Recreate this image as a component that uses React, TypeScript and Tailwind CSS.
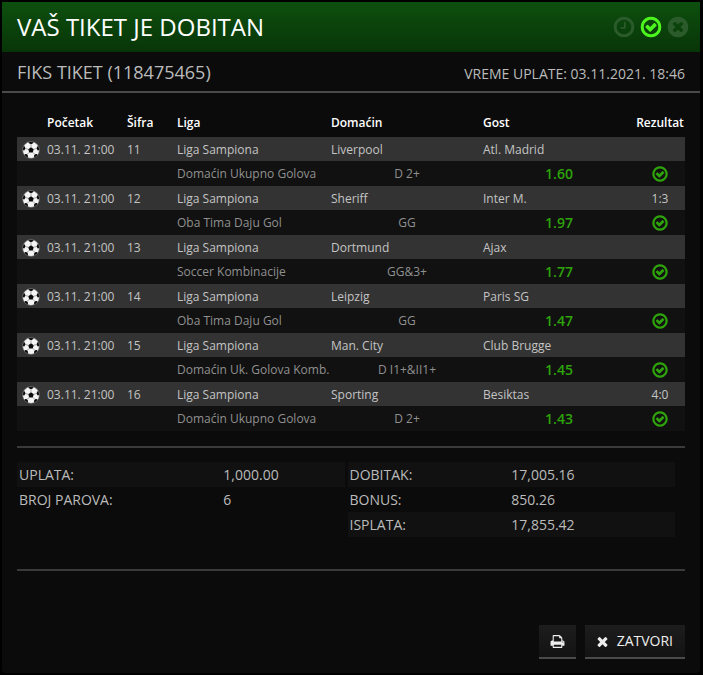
import type React from "react"
import { Fragment } from "react"

const RING =
  "m0 0q0-148-73-273t-198-198-273-73-273 73-198 198-73 273 73 273 198 198 273 73 273-73 198-198 73-273zm224 0q0 209-103 385.5t-279.5 279.5-385.5 103-385.5-103-279.5-279.5-103-385.5 103-385.5 279.5-279.5 385.5-103 385.5 103 279.5 279.5 103 385.5z"

const icons = {
  check:
    "M1299 813l-422 422q-19 19-45 19t-45-19l-294-294q-19-19-19-45t19-45l102-102q19-19 45-19t45 19l147 147 275-275q19-19 45-19t45 19l102 102q19 19 19 45t-19 45zM1440 896" +
    RING,
  clock:
    "M1024 544v448q0 14-9 23t-23 9h-320q-14 0-23-9t-9-23v-64q0-14 9-23t23-9h224v-352q0-14 9-23t23-9h64q14 0 23 9t9 23zM1440 896" +
    RING,
  timesCircle:
    "M1277 1122q0-26-19-45l-181-181 181-181q19-19 19-45 0-27-19-46l-90-90q-19-19-46-19-26 0-45 19l-181 181-181-181q-19-19-45-19-27 0-46 19l-90 90q-19 19-19 46 0 26 19 45l181 181-181 181q-19 19-19 45 0 27 19 46l90 90q19 19 46 19 26 0 45-19l181-181 181 181q19 19 45 19 27 0 46-19l90-90q19-19 19-46zm387-226q0 209-103 385.5t-279.5 279.5-385.5 103-385.5-103-279.5-279.5-103-385.5 103-385.5 279.5-279.5 385.5-103 385.5 103 279.5 279.5 103 385.5z",
  times:
    "M1490 1322q0 40-28 68l-136 136q-28 28-68 28t-68-28l-294-294-294 294q-28 28-68 28t-68-28l-136-136q-28-28-28-68t28-68l294-294-294-294q-28-28-28-68t28-68l136-136q28-28 68-28t68 28l294 294 294-294q28-28 68-28t68 28l136 136q28 28 28 68t-28 68l-294 294 294 294q28 28 28 68z",
  print:
    "M448 1536h896v-256h-896v256zm0-640h896v-384h-160q-40 0-68-28t-28-68v-160h-640v640zm1152 64q0-26-19-45t-45-19-45 19-19 45 19 45 45 19 45-19 19-45zm128 0v416q0 13-9.5 22.5t-22.5 9.5h-224v160q0 40-28 68t-68 28h-960q-40 0-68-28t-28-68v-160h-224q-13 0-22.5-9.5t-9.5-22.5v-416q0-79 56.5-135.5t135.5-56.5h64v-544q0-40 28-68t68-28h672q40 0 88 20t76 48l152 152q28 28 48 76t20 88v256h64q79 0 135.5 56.5t56.5 135.5z",
}

interface IconProps {
  name: keyof typeof icons
  className?: string
}

function Icon({ name, className = "" }: IconProps) {
  return (
    <svg viewBox="0 0 1792 1792" fill="currentColor" aria-hidden="true" className={`shrink-0 ${className}`}>
      <path d={icons[name]} />
    </svg>
  )
}

function Ball() {
  return (
    <svg viewBox="0 0 36 36" aria-hidden="true" className="size-[18px]">
      <circle cx="18" cy="18" r="17" fill="#f4f4f4" />
      <path
        fill="#0a0a0a"
        d="M18 12.500l5.500 4-2 6.500h-7l-2-6.500zM12.500 1.500h11l-1.500 3-4 2-4-2zM1 18l2-8 2.500 1 1.500 4-2.500 4zM35 18l-2-8-2.500 1-1.500 4 2.500 4zM5 29l1-3 4 .500 2 3-.500 4.500zM31 29l-1-3-4 .500-2 3 .500 4.500z"
      />
      <path
        stroke="#777"
        strokeWidth="1.2"
        fill="none"
        d="M18 6.500v6M7 15l5.500 1.500M29 15l-5.500 1.500M10 26.500l4.500-3.500M26 26.500l-4.500-3.500"
      />
      <circle cx="18" cy="18" r="17" fill="none" stroke="#555" strokeWidth="1.500" />
    </svg>
  )
}

const matches = [
  { code: 11, home: "Liverpool", away: "Atl. Madrid", score: "", bet: "Domaćin Ukupno Golova", pick: "D 2+", odds: "1.60" },
  { code: 12, home: "Sheriff", away: "Inter M.", score: "1:3", bet: "Oba Tima Daju Gol", pick: "GG", odds: "1.97" },
  { code: 13, home: "Dortmund", away: "Ajax", score: "", bet: "Soccer Kombinacije", pick: "GG&3+", odds: "1.77" },
  { code: 14, home: "Leipzig", away: "Paris SG", score: "", bet: "Oba Tima Daju Gol", pick: "GG", odds: "1.47" },
  { code: 15, home: "Man. City", away: "Club Brugge", score: "", bet: "Domaćin Uk. Golova Komb.", pick: "D I1+&II1+", odds: "1.45" },
  { code: 16, home: "Sporting", away: "Besiktas", score: "4:0", bet: "Domaćin Ukupno Golova", pick: "D 2+", odds: "1.43" },
]

function MatchTable() {
  return (
    <table className="w-full table-fixed border-collapse text-left text-xs whitespace-nowrap">
      <colgroup>
        <col className="w-[30px]" />
        <col className="w-20" />
        <col className="w-[50px]" />
        <col className="w-[154px]" />
        <col />
        <col />
        <col className="w-[50px]" />
      </colgroup>
      <thead>
        <tr className="h-[29px] text-white">
          <td />
          <th className="font-semibold">Početak</th>
          <th className="font-semibold">Šifra</th>
          <th className="font-semibold">Liga</th>
          <th className="font-semibold">Domaćin</th>
          <th className="font-semibold">Gost</th>
          <th className="text-center font-semibold">Rezultat</th>
        </tr>
      </thead>
      <tbody>
        {matches.map((match) => (
          <Fragment key={match.code}>
            <tr className="h-6 bg-[#333] text-[#c4c4c4] *:pt-px">
              <td className="pl-[5px]">
                <Ball />
              </td>
              <td>03.11. 21:00</td>
              <td>{match.code}</td>
              <td>Liga Sampiona</td>
              <td>{match.home}</td>
              <td>{match.away}</td>
              <td className="text-center">{match.score}</td>
            </tr>
            <tr className="h-[25px] bg-[#111] text-[#909090]">
              <td colSpan={3} />
              <td>{match.bet}</td>
              <td className="text-center">{match.pick}</td>
              <td className="text-center text-sm font-semibold text-[#2ea30b]">{match.odds}</td>
              <td>
                <Icon name="check" className="mx-auto size-[18px] text-[#2ea30b]" />
              </td>
            </tr>
          </Fragment>
        ))}
      </tbody>
    </table>
  )
}

interface TotalsProps {
  rows: [string, string][]
  labelClassName: string
}

function Totals({ rows, labelClassName }: TotalsProps) {
  return (
    <dl className="flex-1">
      {rows.map(([label, value]) => (
        <div key={label} className="flex h-[25px] items-center odd:bg-[#111]">
          <dt className={`pl-0.5 ${labelClassName}`}>{label}</dt>
          <dd>{value}</dd>
        </div>
      ))}
    </dl>
  )
}

interface ActionButtonProps {
  children: React.ReactNode
  label?: string
  className?: string
}

function ActionButton({ children, label, className = "" }: ActionButtonProps) {
  return (
    <button
      type="button"
      aria-label={label}
      className={`flex h-[34px] items-center border-b-2 border-[#4a4a4a] bg-linear-to-b from-[#1d1d1d] to-[#131313] text-sm text-[#eee] ${className}`}
    >
      {children}
    </button>
  )
}

export default function App() {
  return (
    <div className="min-h-screen bg-black pt-0.5 pr-[3px] pb-0.5 pl-0.5 font-['Open_Sans',sans-serif] text-[#bbb]">
      <main className="rounded-b bg-[#0b0b0b] pb-3.5">
        <header className="flex h-[50px] items-center justify-between bg-linear-to-b from-[#0d500e] to-[#083508] pr-2.5 pl-[15px]">
          <h1 className="text-2xl text-white">VAŠ TIKET JE DOBITAN</h1>
          <div className="flex gap-[3px]">
            <Icon name="clock" className="size-6 text-[#2b5a2b]" />
            <Icon name="check" className="size-6 text-[#4df51f]" />
            <Icon name="timesCircle" className="size-6 text-[#2b5a2b]" />
          </div>
        </header>
        <div className="flex h-[41px] items-center justify-between border-b-2 border-[#4a4a4a] px-[15px]">
          <h2 className="text-lg">FIKS TIKET (118475465)</h2>
          <p className="pt-1 text-sm">VREME UPLATE: 03.11.2021. 18:46</p>
        </div>
        <div className="px-[15px] pt-[15px]">
          <MatchTable />
          <section className="mt-[15px] flex h-[125px] gap-[3px] border-y-2 border-[#3a3a3a] pt-3.5 pr-2.5 text-sm">
            <Totals
              labelClassName="w-[63%]"
              rows={[
                ["UPLATA:", "1,000.00"],
                ["BROJ PAROVA:", "6"],
              ]}
            />
            <Totals
              labelClassName="w-1/2"
              rows={[
                ["DOBITAK:", "17,005.16"],
                ["BONUS:", "850.26"],
                ["ISPLATA:", "17,855.42"],
              ]}
            />
          </section>
          <footer className="mt-[54px] flex justify-end gap-[9px]">
            <ActionButton label="Štampaj" className="px-[11px]">
              <Icon name="print" className="size-[15px]" />
            </ActionButton>
            <ActionButton className="gap-[7px] pr-3 pl-2.5">
              <Icon name="times" className="size-[15px]" />
              ZATVORI
            </ActionButton>
          </footer>
        </div>
      </main>
    </div>
  )
}
